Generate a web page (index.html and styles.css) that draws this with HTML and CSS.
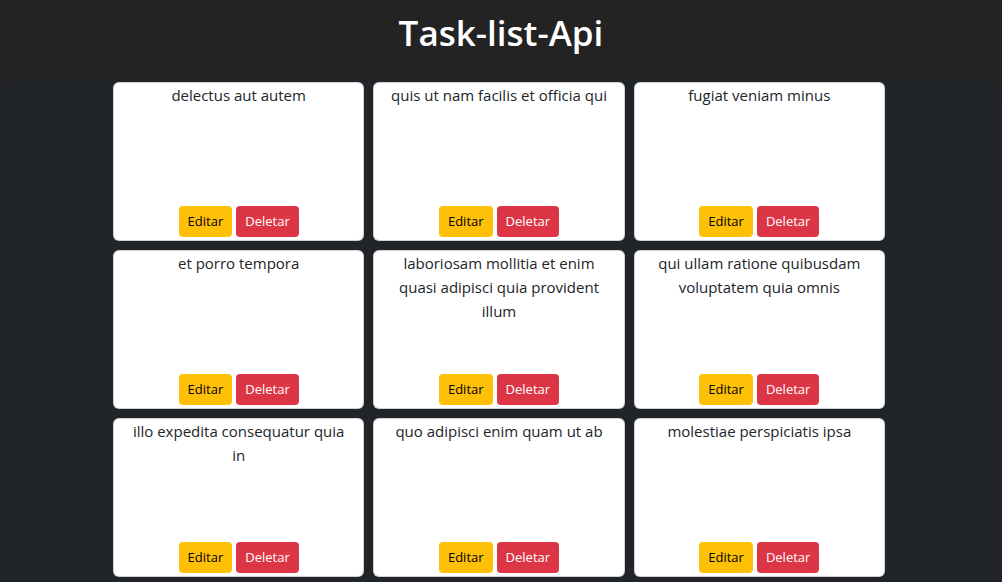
FILE: index.html
```html
<!DOCTYPE html>
<html lang="pt-BR">
<head>
<meta charset="utf-8">
<title>Task-list-Api</title>
<link rel="stylesheet" href="styles.css">
</head>
<body>
<header class="topbar">
  <h1 class="title">Task-list-Api</h1>
</header>
<main class="board">
  <div class="grid">
    <div class="card"><p class="task">delectus aut autem</p><div class="actions"><button class="btn btn-edit">Editar</button><button class="btn btn-del">Deletar</button></div></div>
    <div class="card"><p class="task">quis ut nam facilis et officia qui</p><div class="actions"><button class="btn btn-edit">Editar</button><button class="btn btn-del">Deletar</button></div></div>
    <div class="card"><p class="task">fugiat veniam minus</p><div class="actions"><button class="btn btn-edit">Editar</button><button class="btn btn-del">Deletar</button></div></div>
    <div class="card"><p class="task">et porro tempora</p><div class="actions"><button class="btn btn-edit">Editar</button><button class="btn btn-del">Deletar</button></div></div>
    <div class="card"><p class="task">laboriosam mollitia et enim quasi adipisci quia provident illum</p><div class="actions"><button class="btn btn-edit">Editar</button><button class="btn btn-del">Deletar</button></div></div>
    <div class="card"><p class="task">qui ullam ratione quibusdam voluptatem quia omnis</p><div class="actions"><button class="btn btn-edit">Editar</button><button class="btn btn-del">Deletar</button></div></div>
    <div class="card"><p class="task">illo expedita consequatur quia in</p><div class="actions"><button class="btn btn-edit">Editar</button><button class="btn btn-del">Deletar</button></div></div>
    <div class="card"><p class="task">quo adipisci enim quam ut ab</p><div class="actions"><button class="btn btn-edit">Editar</button><button class="btn btn-del">Deletar</button></div></div>
    <div class="card"><p class="task">molestiae perspiciatis ipsa</p><div class="actions"><button class="btn btn-edit">Editar</button><button class="btn btn-del">Deletar</button></div></div>
  </div>
</main>
</body>
</html>
```

FILE: styles.css
```css
* { box-sizing: border-box; }
html, body { margin: 0; padding: 0; }
body {
  background: #232323;
  font-family: "Open Sans", "Noto Sans", sans-serif;
  color: #212529;
  min-height: 100vh;
}
.topbar {
  background: #232323;
  height: 80px;
  display: flex;
  justify-content: center;
  padding-top: 11px;
}
.title {
  margin: 0;
  font-size: 35px;
  line-height: 44px;
  font-weight: 600;
  color: #fff;
}
.board {
  background: #212529;
  border-radius: 20px 20px 0 0;
  padding: 2px 0 40px;
  min-height: 502px;
}
.grid {
  width: 772px;
  margin-left: calc(50% - 388px);
  display: grid;
  grid-template-columns: repeat(3, 1fr);
  column-gap: 9px;
  row-gap: 9px;
}
.card {
  background: #fff;
  border: 1px solid rgba(0,0,0,.175);
  border-radius: 6px;
  height: 159px;
  display: flex;
  flex-direction: column;
  align-items: center;
  padding: 0 13px 3px;
}
.task {
  margin: 0;
  font-size: 15px;
  line-height: 24px;
  text-align: center;
}
.actions {
  margin-top: auto;
  display: flex;
  gap: 4px;
}
.btn {
  font-family: inherit;
  font-size: 13px;
  line-height: 21px;
  padding: 5px 9px;
  border: 0;
  border-radius: 4px;
}
.btn-edit { background: #ffc107; color: #000; }
.btn-del { background: #dc3545; color: #fff; }
```
